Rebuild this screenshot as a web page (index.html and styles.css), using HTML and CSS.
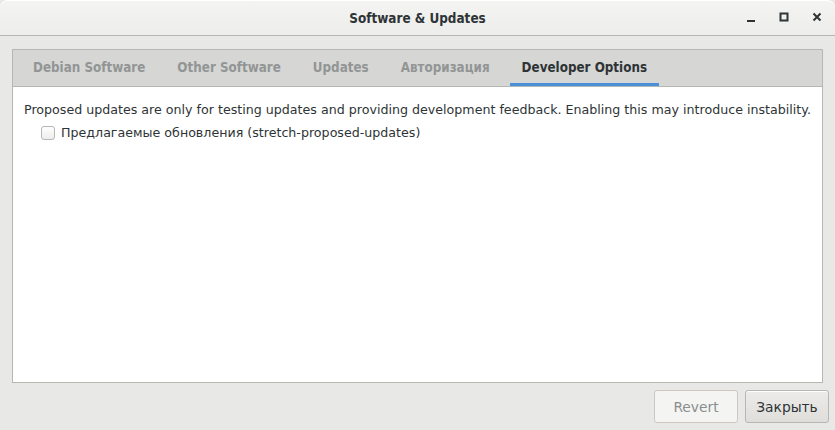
FILE: index.html
```html
<!DOCTYPE html>
<html lang="ru">
<head>
<meta charset="utf-8">
<title>Software &amp; Updates</title>
<link rel="stylesheet" href="styles.css">
</head>
<body>
<div class="window">
  <header class="titlebar">
    <div class="title">Software &amp; Updates</div>
    <div class="controls">
      <span class="ctl">
        <svg width="16" height="16" viewBox="0 0 16 16"><rect x="4" y="11" width="8" height="2" fill="#2e3436"/></svg>
      </span>
      <span class="ctl">
        <svg width="16" height="16" viewBox="0 0 16 16"><rect x="4.5" y="4.5" width="7" height="7" fill="none" stroke="#2e3436" stroke-width="2"/></svg>
      </span>
      <span class="ctl">
        <svg width="16" height="16" viewBox="0 0 16 16"><path d="M4.5 4.5 L11.5 11.5 M11.5 4.5 L4.5 11.5" stroke="#2e3436" stroke-width="2" fill="none"/></svg>
      </span>
    </div>
  </header>
  <main class="body">
    <section class="notebook">
      <nav class="tabs">
        <span class="tab">Debian Software</span>
        <span class="tab">Other Software</span>
        <span class="tab">Updates</span>
        <span class="tab">Авторизация</span>
        <span class="tab active">Developer Options</span>
      </nav>
      <div class="page">
        <p class="desc">Proposed updates are only for testing updates and providing development feedback. Enabling this may introduce instability.</p>
        <label class="check"><span class="box"></span><span>Предлагаемые обновления (stretch-proposed-updates)</span></label>
      </div>
    </section>
    <footer class="actions">
      <button class="btn disabled">Revert</button>
      <button class="btn">Закрыть</button>
    </footer>
  </main>
</div>
</body>
</html>
```
FILE: styles.css
```css
html, body {
  margin: 0;
  padding: 0;
  background: #e8e8e7;
}
.window {
  width: 835px;
  height: 430px;
  display: flex;
  flex-direction: column;
  background: #e8e8e7;
  font-family: "DejaVu Sans", sans-serif;
  color: #2e3436;
  overflow: hidden;
}
.titlebar {
  height: 35px;
  flex: none;
  border-bottom: 1px solid #b6b6b3;
  background: linear-gradient(#f4f4f3, #ededec);
  border-radius: 8px 8px 0 0;
  display: flex;
  align-items: center;
  justify-content: center;
  position: relative;
  box-shadow: inset 0 1px 0 #ffffff;
}
.title {
  font-family: "DejaVu Sans Condensed", "DejaVu Sans", sans-serif;
  font-weight: bold;
  font-size: 13.4px;
  color: #2e3436;
  padding-top: 1px;
}
.controls {
  position: absolute;
  right: 10px;
  top: 9px;
  display: flex;
  gap: 17px;
}
.ctl {
  width: 16px;
  height: 16px;
  display: block;
}
.ctl svg { display: block; }
.body {
  flex: 1;
  display: flex;
  flex-direction: column;
  padding: 13px 12px 6px 12px;
}
.notebook {
  height: 332px;
  border: 1px solid #b6b6b3;
  background: #ffffff;
  display: flex;
  flex-direction: column;
}
.tabs {
  height: 36px;
  flex: none;
  background: #d6d6d4;
  border-bottom: 1px solid #b6b6b3;
  display: flex;
  gap: 8px;
  padding-left: 8px;
}
.tab {
  padding: 2px 12px 1px;
  display: flex;
  align-items: center;
  font-family: "DejaVu Sans Condensed", "DejaVu Sans", sans-serif;
  font-weight: bold;
  font-size: 13.3px;
  color: #929595;
  box-sizing: border-box;
  height: 36px;
  border-bottom: 3px solid transparent;
}
.tab.active {
  color: #2e3436;
  border-bottom-color: #4a90d9;
}
.page {
  padding: 14px 11px;
}
.desc {
  margin: 0;
  font-size: 12.65px;
  line-height: 18px;
  white-space: nowrap;
}
.check {
  display: flex;
  align-items: center;
  gap: 6px;
  margin-top: 5px;
  margin-left: 17px;
  font-size: 12.65px;
  line-height: 18px;
}
.box {
  width: 14px;
  height: 14px;
  box-sizing: border-box;
  border: 1px solid #b6b6b3;
  border-radius: 3px;
  background: linear-gradient(#ffffff, #ededeb);
  display: block;
}
.actions {
  flex: 1;
  display: flex;
  justify-content: flex-end;
  align-items: flex-start;
  gap: 7px;
  padding-top: 7px;
  margin-right: -6px;
}
.btn {
  width: 84px;
  height: 33px;
  box-sizing: border-box;
  font-family: "DejaVu Sans", sans-serif;
  font-size: 13.8px;
  color: #2e3436;
  border: 1px solid #b6b6b3;
  border-radius: 3px;
  background: linear-gradient(#edebe9, #e0deda);
  box-shadow: inset 0 1px 0 #ffffff;
  padding: 0;
}
.btn.disabled {
  color: #8b8e8f;
  border-color: #cdc7c2;
  background: #f4f4f2;
  box-shadow: none;
}
```
